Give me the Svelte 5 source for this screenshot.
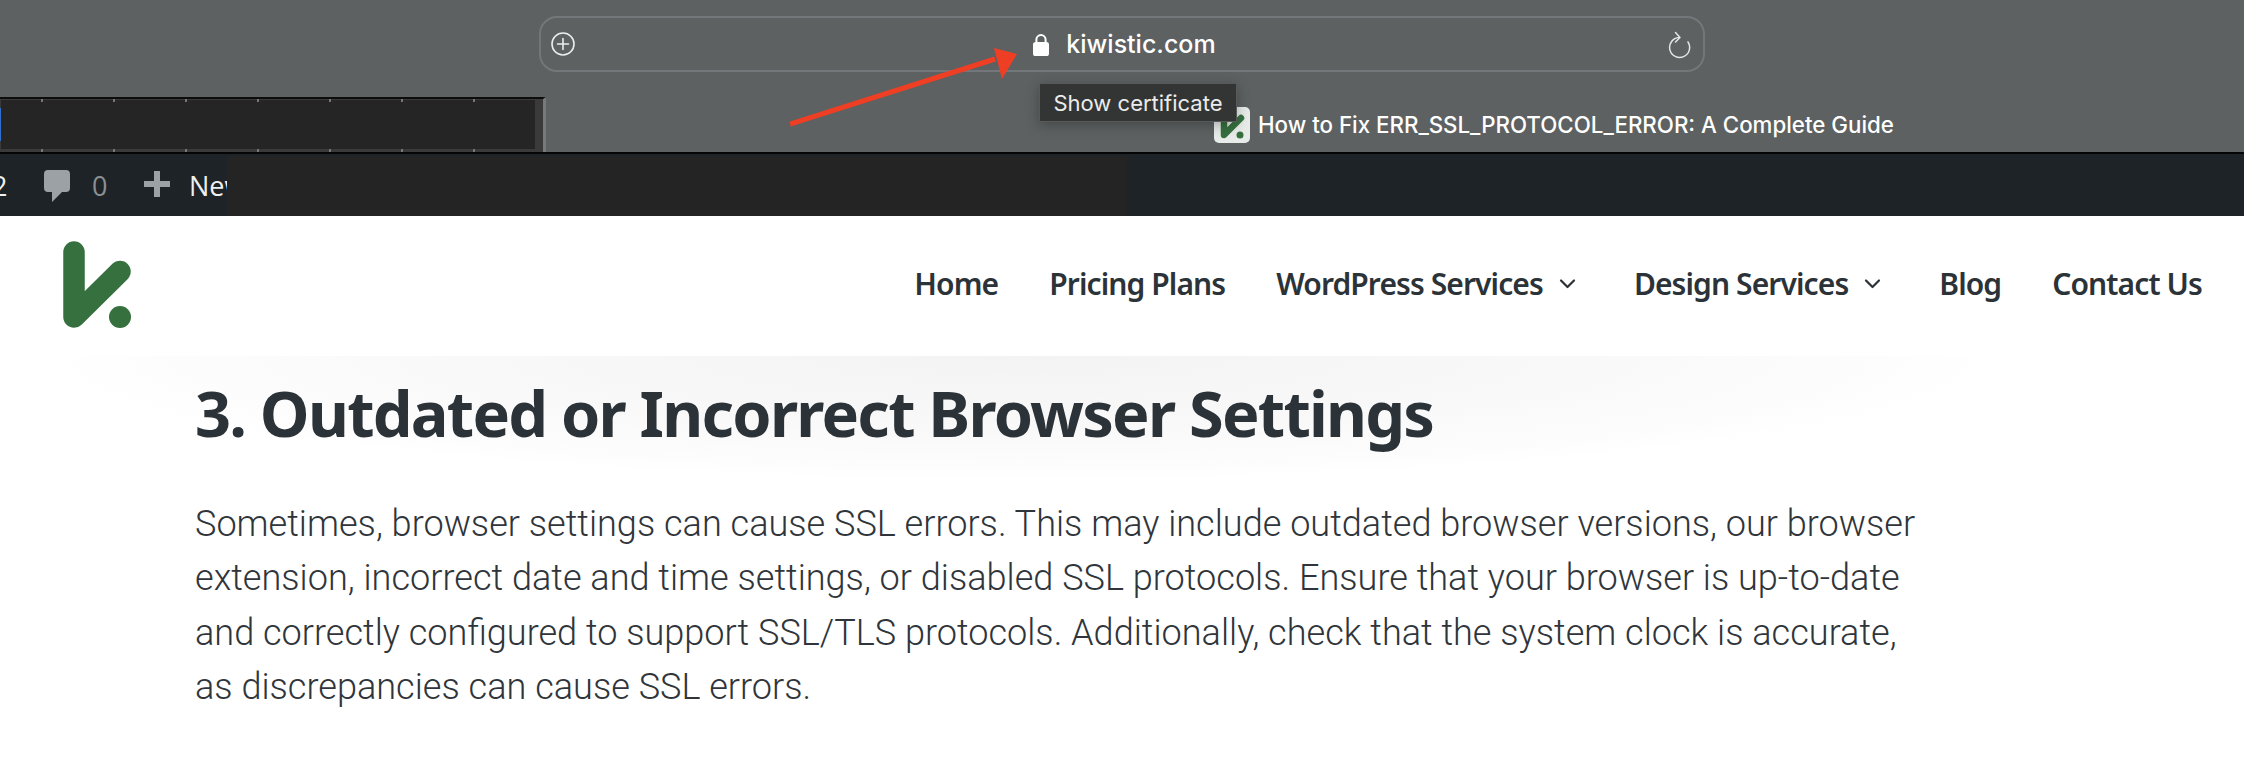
<script>
  const ticks = [41, 113, 185, 257, 329, 401, 473];
  const nav = [
    { label: 'Home' },
    { label: 'Pricing Plans' },
    { label: 'WordPress Services', caret: true },
    { label: 'Design Services', caret: true },
    { label: 'Blog' },
    { label: 'Contact Us' }
  ];
  const lines = [
    'Sometimes, browser settings can cause SSL errors. This may include outdated browser versions, our browser',
    'extension, incorrect date and time settings, or disabled SSL protocols. Ensure that your browser is up-to-date',
    'and correctly configured to support SSL/TLS protocols. Additionally, check that the system clock is accurate,',
    'as discrepancies can cause SSL errors.'
  ];
</script>

<div class="page">
  <section class="browser">
    <div class="urlbar">
      <svg class="plus-circle" width="24" height="24" viewBox="0 0 24 24" fill="none" stroke="#eceded" stroke-width="1.6">
        <circle cx="12" cy="12" r="11" />
        <path d="M12 6.5v11M6.5 12h11" stroke-linecap="round" />
      </svg>
      <div class="address">
        <svg width="16" height="23" viewBox="0 0 16 23">
          <path d="M3.4 10V6.6a4.6 4.6 0 0 1 9.2 0V10" fill="none" stroke="#fff" stroke-width="2" />
          <rect x="0" y="9" width="16" height="14" rx="2.6" fill="#fff" />
        </svg>
        <span>kiwistic.com</span>
      </div>
      <svg class="reload" width="24" height="28" viewBox="0 0 24 28" fill="none" stroke="#e4e5e5" stroke-width="1.5" stroke-linecap="round" stroke-linejoin="round">
        <path d="M12 6.5A10 10 0 1 0 21 11" />
        <path d="M8.5 1.5 13 6.5 8.5 11" />
      </svg>
    </div>
    <div class="tabrow">
      <div class="toolbar">
        <div class="toolbar-inner"></div>
        <i class="blue"></i>
        {#each ticks as t}
          <i class="tick top" style="left:{t}px"></i>
          <i class="tick bottom" style="left:{t}px"></i>
        {/each}
      </div>
      <div class="tabtitle">
        <svg class="favicon" width="36" height="36" viewBox="0 0 36 36">
          <rect width="36" height="36" rx="5" fill="#e8ece8" />
          <path d="M10 8V28L27 11" fill="none" stroke="#36703f" stroke-width="6.5" stroke-linecap="round" stroke-linejoin="round" />
          <circle cx="26" cy="28" r="3.5" fill="#36703f" />
        </svg>
        <span>How to Fix ERR_SSL_PROTOCOL_ERROR: A Complete Guide</span>
      </div>
    </div>
    <div class="tooltip">Show certificate</div>
    <svg class="arrow" width="240" height="90" viewBox="0 0 240 90">
      <path d="M0 78 L205 13" stroke="#ee3f24" stroke-width="5" />
      <path d="M227 8 L204 2 L212 33 Z" fill="#ee3f24" />
    </svg>
  </section>

  <section class="adminbar">
    <div class="overlay"></div>
    <span class="num">2</span>
    <svg class="comment" width="26" height="32" viewBox="0 0 26 32">
      <path d="M4 0H22a4 4 0 0 1 4 4V18a4 4 0 0 1-4 4H18L8 32V22H4a4 4 0 0 1-4-4V4a4 4 0 0 1 4-4Z" fill="#9ca1a6" />
    </svg>
    <span class="zero">0</span>
    <svg class="plus" width="26" height="26" viewBox="0 0 26 26">
      <path d="M10 0h6v10h10v6H16v10h-6V16H0v-6h10Z" fill="#9ca1a6" />
    </svg>
    <span class="new">New</span>
  </section>

  <header class="header">
    <svg class="logo" width="68" height="87" viewBox="63 241 68 87">
      <path d="M74 252V317L120 271.5" fill="none" stroke="#36703f" stroke-width="21.5" stroke-linecap="round" stroke-linejoin="round" />
      <circle cx="120" cy="317" r="11" fill="#36703f" />
    </svg>
    <nav class="nav">
      {#each nav as item}
        <a href="#top" class="navitem">
          {item.label}
          {#if item.caret}
            <svg class="caret" width="19" height="11" viewBox="0 0 19 11" fill="none" stroke="#2c3338" stroke-width="2.2" stroke-linecap="round" stroke-linejoin="round"><path d="M3 2.5 9.5 9 16 2.5" /></svg>
          {/if}
        </a>
      {/each}
    </nav>
  </header>

  <main class="content">
    <div class="shadow"></div>
    <h2>3. Outdated or Incorrect Browser Settings</h2>
    <p>
      {#each lines as line}
        <span>{line}</span>
      {/each}
    </p>
  </main>
</div>

<style>
  :global(body) { margin: 0; background: #fff; }
  .page { width: 2244px; height: 762px; overflow: hidden; position: relative; background: #fff; }

  .browser {
    position: relative; height: 152px; background: #5d6161;
    padding-top: 16px; box-sizing: border-box;
    font-family: Inter, "Liberation Sans", sans-serif; color: #fff;
  }
  .urlbar {
    position: relative; margin-left: 539px; width: 1166px; height: 56px;
    box-sizing: border-box; border: 2px solid #73777a; border-radius: 18px;
    display: flex; align-items: center; justify-content: center;
  }
  .plus-circle { position: absolute; left: 10px; top: 14px; }
  .reload { position: absolute; right: 12px; top: 13px; }
  .address { display: flex; align-items: center; gap: 17px; margin-left: 5px; font-size: 25px; font-weight: 500; }
  .tabrow { display: flex; align-items: center; margin-top: 25px; height: 55px; }
  .toolbar { position: relative; width: 546px; height: 55px; box-sizing: border-box; background: #3a3a3a; border-top: 2px solid #0c0c0c; border-right: 3px solid #767a7c; flex: none; padding: 1px 8px 3px 1px; }
  .toolbar-inner { height: 100%; background: #252525; }
  .blue { position: absolute; left: 0; top: 9px; width: 1px; height: 33px; background: #2f6fd0; }
  .tick { position: absolute; width: 2px; height: 3px; background: #777; }
  .tick.top { top: 0; }
  .tick.bottom { bottom: 0; }
  .tabtitle { display: flex; align-items: center; gap: 8px; margin-left: 668px; font-size: 22.3px; font-weight: 500; white-space: nowrap; }
  .favicon { flex: none; }
  .tooltip {
    position: absolute; left: 1039px; top: 83px; width: 198px; height: 39px; box-sizing: border-box;
    background: #333534; border: 1px solid #585a5a; color: #ececec; font-size: 22px;
    display: flex; align-items: center; justify-content: center; white-space: nowrap;
    box-shadow: 0 3px 12px rgba(0,0,0,.28);
  }
  .arrow { position: absolute; left: 790px; top: 46px; }

  .adminbar {
    position: relative; height: 64px; background: #1d2327; border-top: 2px solid #050505; box-sizing: border-box;
    display: flex; align-items: center; font-family: "Open Sans", "Liberation Sans", sans-serif; font-size: 27px; overflow: hidden;
  }
  .overlay { position: absolute; left: 227px; top: 2px; width: 900px; bottom: 0; background: #242424; }
  .num { color: #f0f0f1; margin-left: -8px; width: 52px; }
  .comment { flex: none; margin-top: 2px; }
  .zero { color: #8b9095; margin-left: 22px; width: 52px; }
  .plus { flex: none; margin-top: -2px; }
  .new { position: relative; color: #f0f0f1; margin-left: 19px; width: 38px; overflow: hidden; }

  .header {
    position: relative; z-index: 1; height: 140px; box-sizing: border-box; background: #fff;
    display: flex; justify-content: space-between; align-items: flex-start;
    padding: 25px 42px 0 63px;
  }
  .logo { display: block; }
  .nav { display: flex; align-items: center; gap: 51px; height: 84px; font-family: "Noto Sans", sans-serif; }
  .navitem { display: flex; align-items: center; gap: 15px; color: #2c3338; font-size: 30px; font-weight: 600; text-decoration: none; white-space: nowrap; letter-spacing: -0.9px; }
  .caret { margin-right: 6px; }

  .content { position: relative; padding: 17px 0 0 195px; color: #2c3338; }
  .shadow { position: absolute; left: 50px; top: 0; width: 1940px; height: 125px; background: radial-gradient(ellipse 50% 100% at 50% 0, #f3f3f3, #f9f9f9 60%, #fdfdfd 90%, #fff 100%); }
  h2 { position: relative; margin: 0; font-family: "Noto Sans", sans-serif; font-weight: 700; font-size: 63px; line-height: 80px; letter-spacing: -1.75px; white-space: nowrap; }
  p { position: relative; margin: 44px 0 0; font-family: Roboto, sans-serif; font-weight: 300; font-size: 36.1px; line-height: 54.3px; color: #2f353a; }
  p span { display: block; white-space: nowrap; }
</style>
